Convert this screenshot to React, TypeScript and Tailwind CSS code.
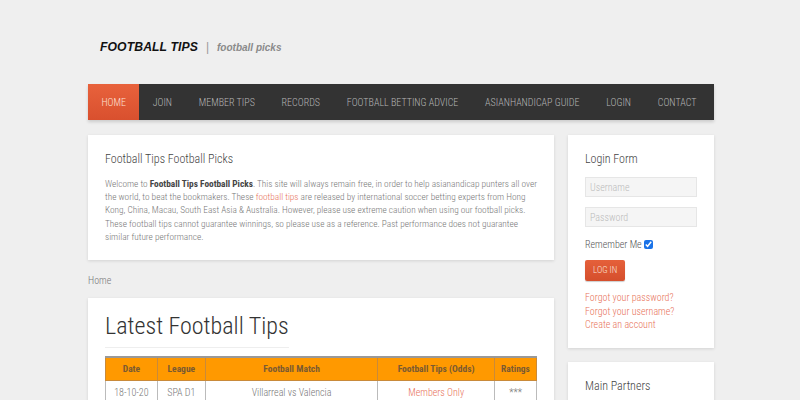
import { clsx } from 'clsx'

const navItems = ['HOME', 'JOIN', 'MEMBER TIPS', 'RECORDS', 'FOOTBALL BETTING ADVICE', 'ASIANHANDICAP GUIDE', 'LOGIN', 'CONTACT']

const cond = "font-['Roboto_Condensed','Liberation_Sans_Narrow','DejaVu_Sans_Condensed',Roboto,sans-serif]"

export default function App() {
  return (
    <div className={clsx('min-h-[400px] bg-[#efefef] text-[#777]', cond)}>
      <div className="w-[626px] ml-[88px]">
        {/* logo */}
        <div className="h-[84px] flex items-center pl-[12px] pt-[10px] gap-[8px] font-['Liberation_Sans',Arial,sans-serif] italic font-bold">
          <span className="text-[12.2px] text-[#111] tracking-[0.1px]">FOOTBALL TIPS</span>
          <span className="text-[12px] text-[#999] not-italic font-normal">|</span>
          <span className="text-[10px] text-[#8a8a8a]">football picks</span>
        </div>

        {/* nav */}
        <div className="h-[36px] bg-[#333] flex shadow-[0_2px_3px_rgba(0,0,0,0.15)]">
          {navItems.map((item, i) => (
            <div
              key={item}
              className={clsx(
                'px-[13.4px] flex items-center text-[10px] font-light',
                i === 0 ? 'bg-gradient-to-b from-[#e8623c] to-[#d9502e] text-[#fde0d6]' : 'text-[#b5b5b5]'
              )}
            >
              {item}
            </div>
          ))}
        </div>

        <div className="flex gap-[14px] mt-[15px] items-start">
          {/* main column */}
          <div className="w-[466px] flex flex-col">
            <div className="bg-white shadow-[0_1px_3px_rgba(0,0,0,0.12)] px-[17px] pt-[16px] pb-[17px]">
              <h2 className="text-[12px] font-light text-[#444] leading-[16px]">Football Tips Football Picks</h2>
              <p className="mt-[10px] text-[9.3px] leading-[13.2px] font-light text-[#777]">
                Welcome to <b className="font-bold text-[#444]">Football Tips Football Picks</b>. This site will always remain free, in order to help asianandicap punters all over the world, to beat the bookmakers. These{' '}
                <span className="text-[#e8735a]">football tips</span> are released by international soccer betting experts from Hong Kong, China, Macau, South East Asia &amp; Australia. However, please use extreme caution when using our football picks. These football tips cannot guarantee winnings, so please use as a reference. Past performance does not guarantee similar future performance.
              </p>
            </div>

            <div className="mt-[15px] text-[10px] font-light text-[#777] leading-[12px]">Home</div>

            <div className="mt-[11px] bg-white shadow-[0_1px_3px_rgba(0,0,0,0.12)] px-[17px] pt-[15px] pb-[20px]">
              <div className="inline-block border-b border-[#eee] pb-[8px]">
                <h1 className="text-[24px] font-light text-[#333] leading-[26px]">Latest Football Tips</h1>
              </div>
              <table className="mt-[8px] w-[432px] border-collapse border-t-2 border-[#999] text-center">
                <thead>
                  <tr className="bg-[#ff9900] h-[23px] text-[9.5px] font-bold text-[#7a5a32]">
                    <th className="w-[52px] border border-[#c98a3a] font-bold">Date</th>
                    <th className="w-[48px] border border-[#c98a3a] font-bold">League</th>
                    <th className="w-[173px] border border-[#c98a3a] font-bold">Football Match</th>
                    <th className="w-[117px] border border-[#c98a3a] font-bold">Football Tips (Odds)</th>
                    <th className="w-[42px] border border-[#c98a3a] font-bold">Ratings</th>
                  </tr>
                </thead>
                <tbody>
                  <tr className="h-[24px] text-[10px] font-light text-[#777]">
                    <td className="border border-[#bbb]">18-10-20</td>
                    <td className="border border-[#bbb]">SPA D1</td>
                    <td className="border border-[#bbb]">Villarreal vs Valencia</td>
                    <td className="border border-[#bbb] text-[#e8735a]">Members Only</td>
                    <td className="border border-[#bbb]">***</td>
                  </tr>
                </tbody>
              </table>
            </div>
          </div>

          {/* sidebar */}
          <div className="w-[146px] flex flex-col gap-[14px]">
            <div className="bg-white shadow-[0_1px_3px_rgba(0,0,0,0.12)] px-[17px] pt-[16px] pb-[16px]">
              <h3 className="text-[12px] font-light text-[#444] leading-[16px]">Login Form</h3>
              <div className="mt-[10px] h-[20px] bg-[#f5f5f5] border border-[#e6e6e6] flex items-center px-[4px] text-[10px] font-light text-[#bbb]">Username</div>
              <div className="mt-[10px] h-[20px] bg-[#f5f5f5] border border-[#e6e6e6] flex items-center px-[4px] text-[10px] font-light text-[#bbb]">Password</div>
              <div className="mt-[10px] flex items-center gap-[2px] text-[10px] text-[#555] font-light">
                Remember Me
                <input type="checkbox" defaultChecked className="w-[9px] h-[9px] m-0 accent-[#1a73e8]" />
              </div>
              <div className="mt-[8px] inline-flex h-[21px] px-[8px] items-center bg-gradient-to-b from-[#e5603a] to-[#d54e2c] rounded-[2px] text-[9px] text-[#fbe3da] font-light shadow-[0_1px_1px_rgba(0,0,0,0.2)]">LOG IN</div>
              <div className="mt-[10px] flex flex-col text-[10px] leading-[13.5px] font-light text-[#e8735a]">
                <span>Forgot your password?</span>
                <span>Forgot your username?</span>
                <span>Create an account</span>
              </div>
            </div>
            <div className="bg-white shadow-[0_1px_3px_rgba(0,0,0,0.12)] px-[17px] pt-[16px] h-[80px]">
              <h3 className="text-[12px] font-light text-[#444] leading-[16px]">Main Partners</h3>
            </div>
          </div>
        </div>
      </div>
    </div>
  )
}
